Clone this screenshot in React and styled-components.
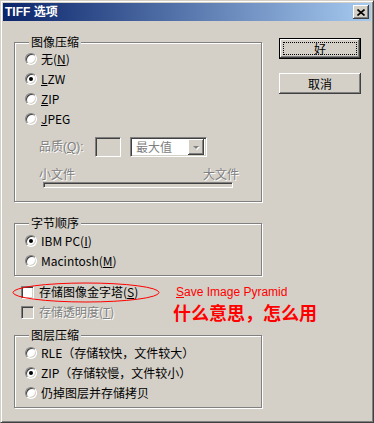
import React from "react";
import styled, { createGlobalStyle, css } from "styled-components";

const GlobalStyle = createGlobalStyle`
    html, body {
        margin: 0;
        padding: 0;
        background: #d4d0c8;
    }
    body {
        font-family: "Noto Sans CJK SC", "Liberation Sans", sans-serif;
        font-size: 12px;
        color: #000;
    }
`;

const raised = css`
    background: #d4d0c8;
    box-shadow: inset -1px -1px #404040, inset 1px 1px #fff,
        inset -2px -2px #808080, inset 2px 2px #d4d0c8;
`;

const sunken = css`
    border: 1px solid;
    border-color: #808080 #fff #fff #808080;
    box-shadow: inset 1px 1px #404040, inset -1px -1px #d4d0c8;
`;

const disabledText = css`
    color: #808080;
    text-shadow: 1px 1px 0 #fff;
`;

const Window = styled.div`
    box-sizing: border-box;
    width: 374px;
    height: 423px;
    padding: 2px;
    background: #d4d0c8;
    border: 1px solid;
    border-color: #d4d0c8 #404040 #404040 #d4d0c8;
    box-shadow: inset 1px 1px #fff, inset -1px -1px #808080;
    display: flex;
    flex-direction: column;
`;

const TitleBar = styled.div`
    height: 18px;
    flex-shrink: 0;
    display: flex;
    align-items: center;
    justify-content: space-between;
    padding: 0 2px;
    background: linear-gradient(to right, #0a246a, #a6caf0);
`;

const Title = styled.span`
    color: #fff;
    font-family: "Liberation Sans", "Noto Sans CJK SC", sans-serif;
    font-weight: bold;
    font-size: 12px;
    line-height: 14px;
`;

const CloseButton = styled.div`
    ${raised};
    width: 16px;
    height: 14px;
    display: flex;
    align-items: center;
    justify-content: center;
`;

const Body = styled.div`
    display: flex;
    gap: 17px;
    padding-left: 11px;
`;

const LeftCol = styled.div`
    width: 248px;
    display: flex;
    flex-direction: column;
`;

const RightCol = styled.div`
    display: flex;
    flex-direction: column;
    gap: 14px;
    padding-top: 17px;
`;

const Group = styled.div`
    position: relative;
    box-sizing: border-box;
    border: 1px solid #808080;
    box-shadow: inset 1px 1px #fff, 1px 1px #fff;
    margin-top: ${(p) => p.$top}px;
    padding: ${(p) => p.$pad};
`;

const Legend = styled.span`
    position: absolute;
    top: -8px;
    left: 14px;
    padding: 0 2px;
    line-height: 14px;
    background: #d4d0c8;
`;

const OptionRow = styled.div`
    height: 20px;
    display: flex;
    align-items: center;
    gap: ${(p) => p.$gap || 4}px;
    line-height: 14px;
    white-space: nowrap;
    ${(p) => p.$disabled && disabledText};
`;

const Radio = styled.span`
    box-sizing: border-box;
    width: 12px;
    height: 12px;
    flex-shrink: 0;
    border-radius: 50%;
    background: #fff;
    border: 1px solid;
    border-color: #808080 #fff #fff #808080;
    box-shadow: inset 1px 1px #404040, inset -1px -1px #d4d0c8;
    display: flex;
    align-items: center;
    justify-content: center;
    &::after {
        content: "";
        width: 4px;
        height: 4px;
        border-radius: 50%;
        background: ${(p) => (p.$checked ? "#000" : "transparent")};
    }
`;

const CheckBox = styled.span`
    box-sizing: border-box;
    width: 13px;
    height: 13px;
    flex-shrink: 0;
    ${sunken};
    background: ${(p) => (p.$disabled ? "#d4d0c8" : "#fff")};
`;

const Key = styled.span`
    text-decoration: underline;
    text-underline-offset: 1px;
`;

const QualityRow = styled.div`
    display: flex;
    align-items: center;
    height: 20px;
    margin-top: 8px;
    padding-left: 14px;
`;

const QualityLabel = styled.span`
    ${disabledText};
    width: 56px;
    line-height: 14px;
    font-family: "Liberation Sans", "Noto Sans CJK SC", sans-serif;
`;

const NumberBox = styled.div`
    box-sizing: border-box;
    width: 26px;
    height: 20px;
    ${sunken};
    background: #d4d0c8;
`;

const Select = styled.div`
    box-sizing: border-box;
    width: 77px;
    height: 20px;
    margin-left: 9px;
    ${sunken};
    background: #fff;
    display: flex;
    align-items: center;
    justify-content: space-between;
    padding: 0 2px 0 5px;
    color: #808080;
    line-height: 14px;
`;

const DropButton = styled.div`
    ${raised};
    width: 16px;
    height: 16px;
    display: flex;
    align-items: center;
    justify-content: center;
    &::after {
        content: "";
        border-left: 3px solid transparent;
        border-right: 3px solid transparent;
        border-top: 3px solid #808080;
        filter: drop-shadow(1px 1px 0 #fff);
    }
`;

const SliderBlock = styled.div`
    margin-top: 10px;
    margin-left: 14px;
    width: 200px;
`;

const SliderLabels = styled.div`
    display: flex;
    justify-content: space-between;
    line-height: 14px;
    ${disabledText};
`;

const Track = styled.div`
    box-sizing: border-box;
    margin: 1px 0 0 4px;
    width: 190px;
    height: 6px;
    border: 1px solid;
    border-color: #808080 #fff #fff #808080;
    box-shadow: inset 1px 1px #404040, inset -1px -1px #d4d0c8;
`;

const CheckSection = styled.div`
    position: relative;
    display: grid;
    grid-template-columns: 152px max-content;
    margin-top: 6px;
    padding-left: 7px;
`;

const Ellipse = styled.svg`
    position: absolute;
    left: -2px;
    top: 0;
    pointer-events: none;
`;

const NoteSmall = styled.div`
    height: 20px;
    display: flex;
    align-items: center;
    padding-left: 3px;
    color: #ff0000;
    font-family: "Liberation Sans", sans-serif;
    font-size: 12px;
`;

const NoteBig = styled.div`
    height: 20px;
    display: flex;
    align-items: center;
    color: #ff0000;
    font-weight: bold;
    font-size: 18px;
    line-height: 20px;
`;

const Button = styled.div`
    position: relative;
    box-sizing: border-box;
    width: 82px;
    height: 21px;
    display: flex;
    align-items: center;
    justify-content: center;
    line-height: 14px;
    ${raised};
    ${(p) =>
        p.$default &&
        css`
            border: 1px solid #000;
            &::after {
                content: "";
                position: absolute;
                inset: 3px;
                border: 1px dotted #000;
            }
        `};
`;

const radioGroup = (items) =>
    items.map((item, i) => (
        <OptionRow key={i}>
            <Radio $checked={item.checked} />
            <span>{item.label}</span>
        </OptionRow>
    ));

const App = () => {
    return (
        <>
            <GlobalStyle />
            <Window>
                <TitleBar>
                    <Title>TIFF 选项</Title>
                    <CloseButton>
                        <svg width="8" height="7" viewBox="0 0 8 7">
                            <path
                                d="M0.5 0.5 L7.5 6.5 M7.5 0.5 L0.5 6.5"
                                stroke="#000"
                                strokeWidth="1.6"
                            />
                        </svg>
                    </CloseButton>
                </TitleBar>
                <Body>
                    <LeftCol>
                        <Group $top={21} $pad="6px 0 13px 10px">
                            <Legend>图像压缩</Legend>
                            {radioGroup([
                                { label: <>无(<Key>N</Key>)</> },
                                { label: <><Key>L</Key>ZW</>, checked: true },
                                { label: <><Key>Z</Key>IP</> },
                                { label: <><Key>J</Key>PEG</> },
                            ])}
                            <QualityRow>
                                <QualityLabel>
                                    品质(<Key>Q</Key>):
                                </QualityLabel>
                                <NumberBox />
                                <Select>
                                    <span>最大值</span>
                                    <DropButton />
                                </Select>
                            </QualityRow>
                            <SliderBlock>
                                <SliderLabels>
                                    <span>小文件</span>
                                    <span>大文件</span>
                                </SliderLabels>
                                <Track />
                            </SliderBlock>
                        </Group>

                        <Group $top={21} $pad="7px 0 4px 10px">
                            <Legend>字节顺序</Legend>
                            {radioGroup([
                                { label: <>IBM PC(<Key>I</Key>)</>, checked: true },
                                { label: <>Macintosh(<Key>M</Key>)</> },
                            ])}
                        </Group>

                        <CheckSection>
                            <Ellipse width="150" height="22" viewBox="0 0 150 22">
                                <ellipse
                                    cx="74"
                                    cy="10.5"
                                    rx="73"
                                    ry="9.5"
                                    fill="none"
                                    stroke="#ff0000"
                                    strokeWidth="1"
                                />
                            </Ellipse>
                            <OptionRow $gap={5}>
                                <CheckBox />
                                <span>
                                    存储图像金字塔(<Key>S</Key>)
                                </span>
                            </OptionRow>
                            <NoteSmall>
                                <span>
                                    <Key>S</Key>ave Image Pyramid
                                </span>
                            </NoteSmall>
                            <OptionRow $gap={5} $disabled>
                                <CheckBox $disabled />
                                <span>
                                    存储透明度(<Key>T</Key>)
                                </span>
                            </OptionRow>
                            <NoteBig>什么意思，怎么用</NoteBig>
                        </CheckSection>

                        <Group $top={13} $pad="7px 0 4px 10px">
                            <Legend>图层压缩</Legend>
                            {radioGroup([
                                { label: "RLE（存储较快，文件较大）" },
                                { label: "ZIP（存储较慢，文件较小）", checked: true },
                                { label: "仍掉图层并存储拷贝" },
                            ])}
                        </Group>
                    </LeftCol>
                    <RightCol>
                        <Button $default>好</Button>
                        <Button>取消</Button>
                    </RightCol>
                </Body>
            </Window>
        </>
    );
};

export default App;
